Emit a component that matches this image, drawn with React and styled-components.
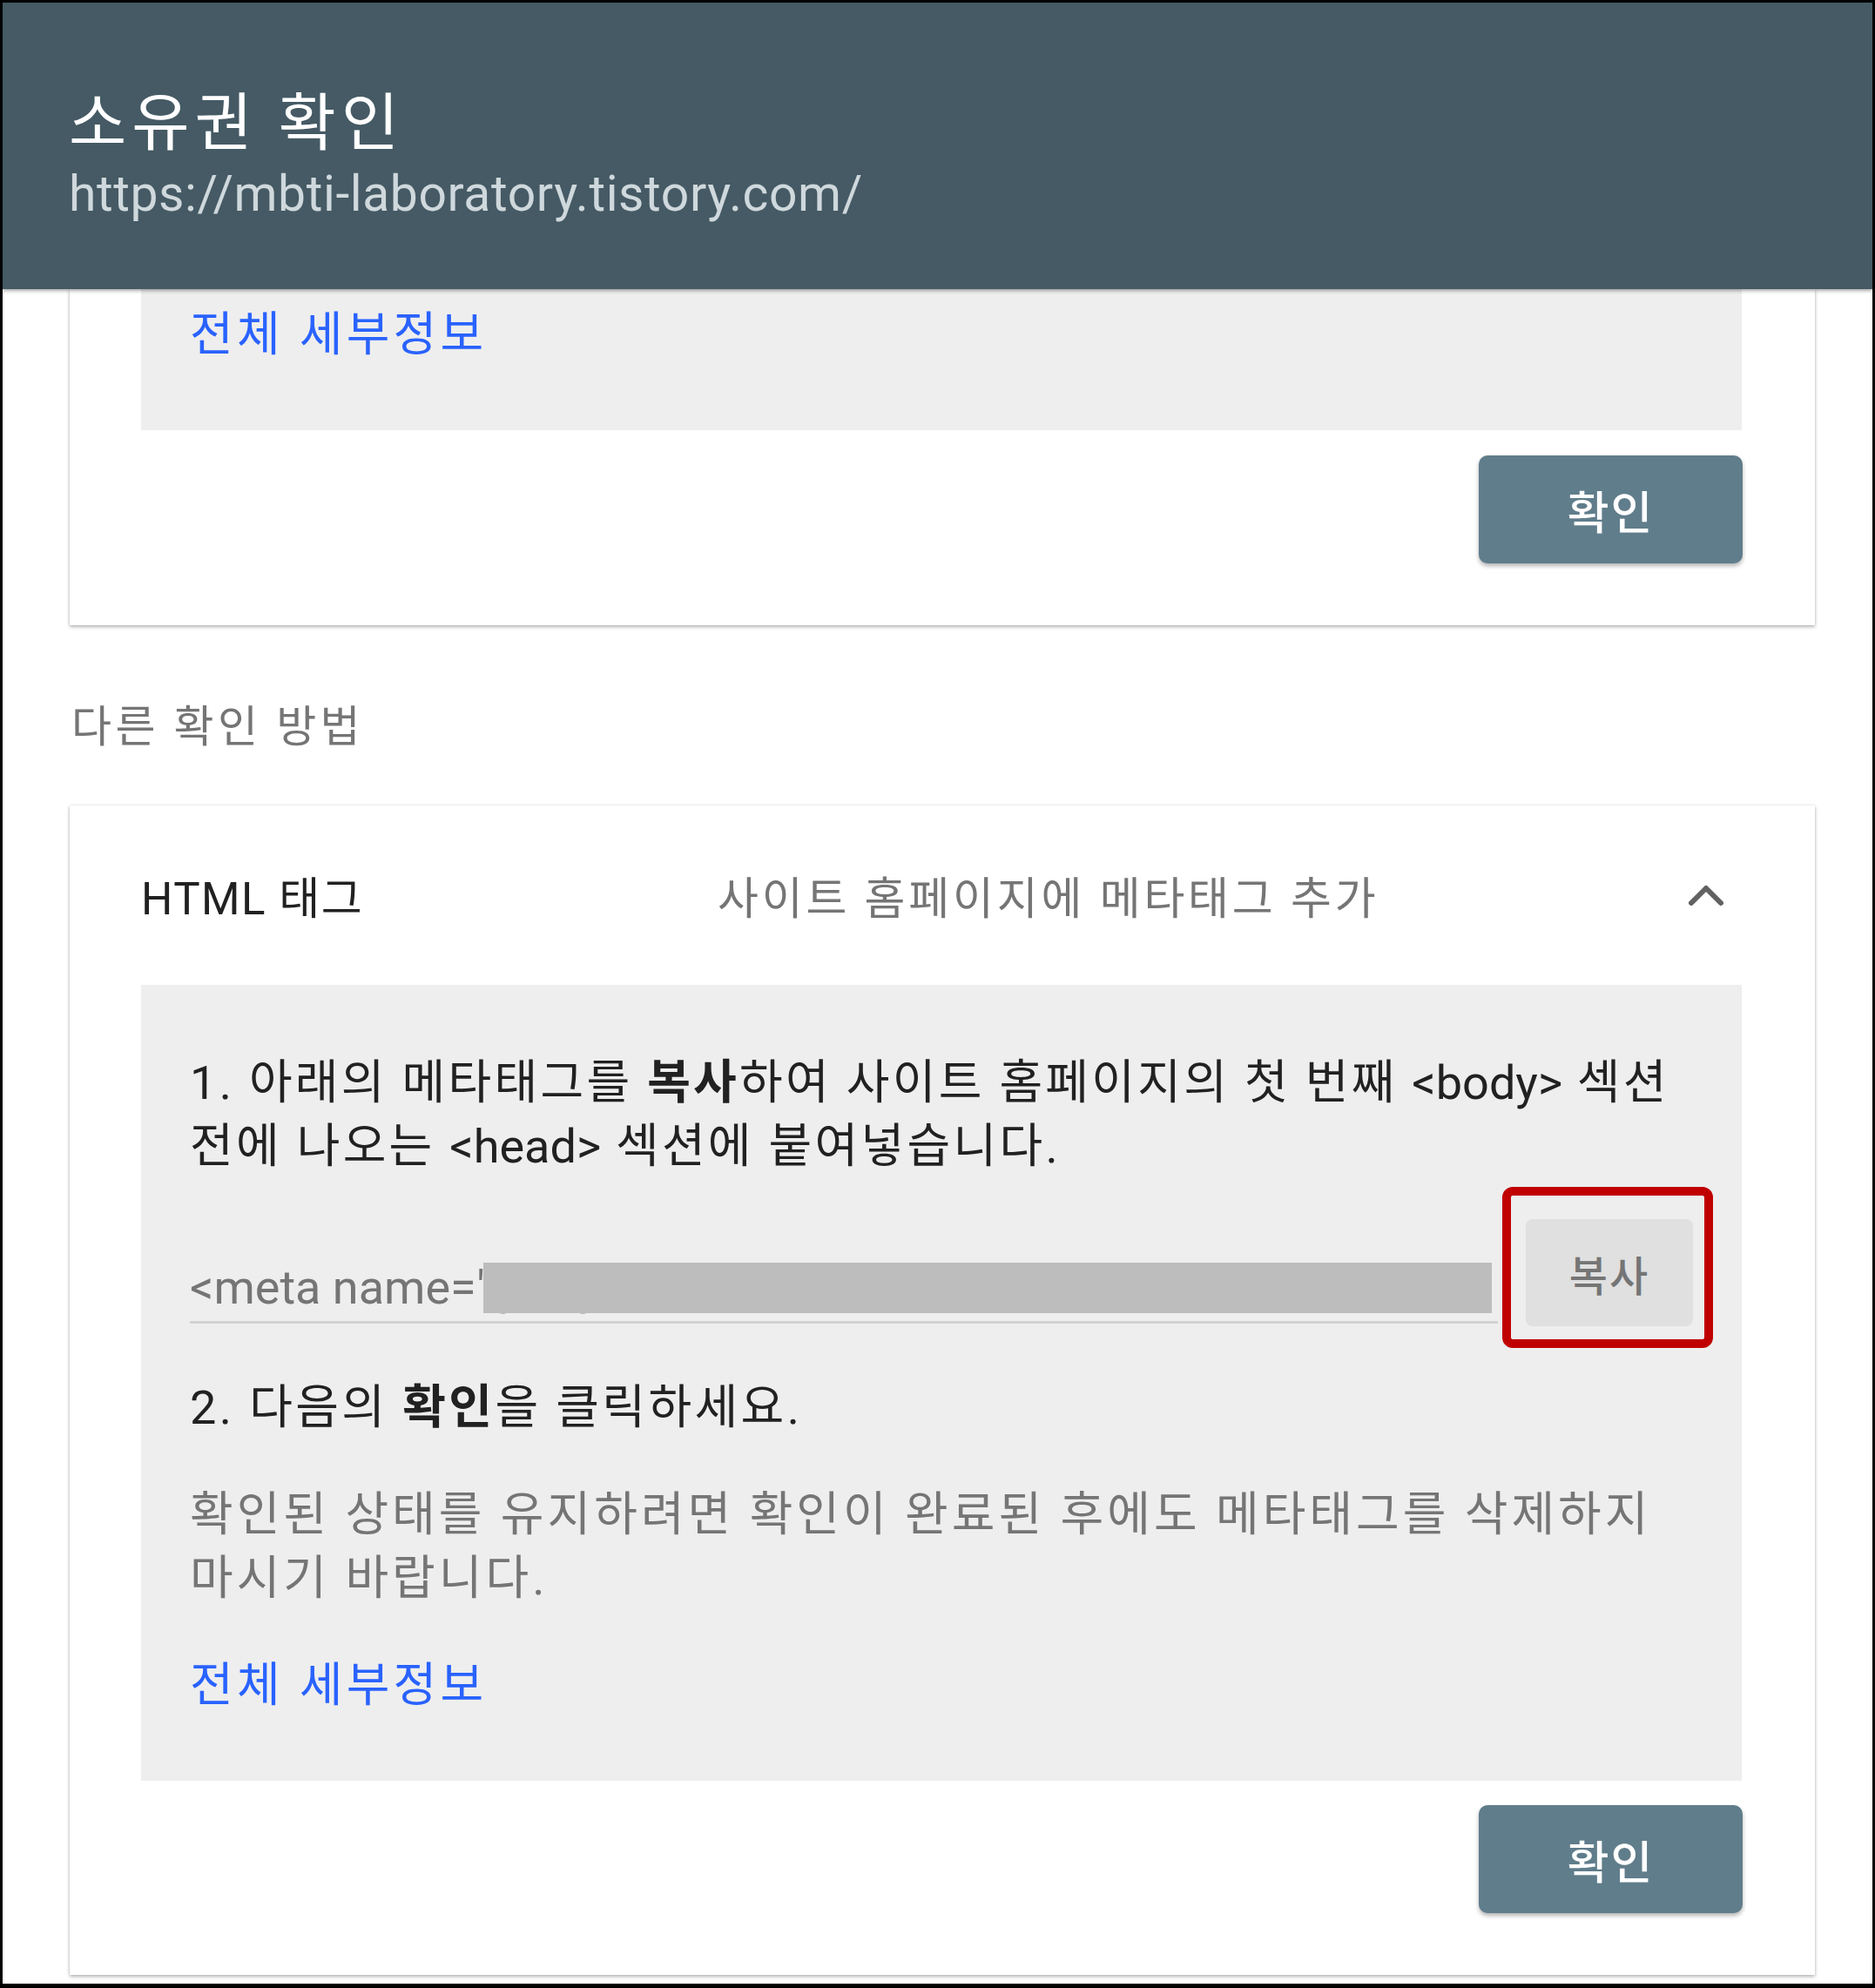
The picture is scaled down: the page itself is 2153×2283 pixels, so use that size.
import React from "react";
import styled, { createGlobalStyle } from "styled-components";

const GlobalStyle = createGlobalStyle`
  html, body { margin: 0; padding: 0; background: #fff; }
  body { font-family: Roboto, "Noto Sans CJK KR", sans-serif; }
  * { box-sizing: border-box; }
`;

const Frame = styled.div`
  width: 2153px;
  height: 2283px;
  border: 3px solid #000;
  border-bottom-width: 5px;
  background: #fff;
  overflow: hidden;
  display: flex;
  flex-direction: column;
`;

const Header = styled.header`
  flex: none;
  height: 329px;
  background: #455a64;
  padding: 96px 76px 0;
  box-shadow: 0 2px 4px rgba(0, 0, 0, 0.35);
  position: relative;
  z-index: 2;
`;

const Title = styled.h1`
  margin: 0;
  font-size: 72px;
  line-height: 86px;
  font-weight: 400;
  letter-spacing: 6px;
  color: #fff;
`;

const SiteUrl = styled.div`
  margin-top: 3px;
  font-size: 57px;
  line-height: 70px;
  color: #cfd8dc;
  letter-spacing: 0.6px;
`;

const Content = styled.main`
  flex: 1;
  padding: 0 66px 0 77px;
  display: flex;
  flex-direction: column;
`;

const Card = styled.section`
  background: #fff;
  box-shadow: 0 2px 4px rgba(0, 0, 0, 0.28), 0 0 3px rgba(0, 0, 0, 0.1);
`;

const SectionLabel = styled.div`
  margin: 82px 0 55px 2px;
  font-size: 50px;
  line-height: 70px;
  letter-spacing: 4.4px;
  color: #757575;
`;

const CardHead = styled.div`
  height: 206px;
  display: grid;
  grid-template-columns: 662px 1fr auto;
  align-items: center;
  padding: 0 105px 0 82px;
`;

const MethodName = styled.div`
  font-size: 51px;
  letter-spacing: 1.5px;
  color: #212121;
`;

const MethodDesc = styled.div`
  font-size: 51px;
  letter-spacing: 3.8px;
  color: #757575;
`;

const GrayBox = styled.div`
  margin: 0 84px 0 82px;
  background: #eeeeee;
  padding: ${(p) => p.$top}px 56px 73px;
`;

const Para = styled.p`
  margin: ${(p) => p.$mt || 0}px 0 0;
  font-size: 54px;
  line-height: 73px;
  letter-spacing: ${(p) => p.$ls || 3}px;
  color: ${(p) => (p.$muted ? "#757575" : "#212121")};

  b {
    font-weight: 700;
  }
`;

const Tag = styled.span`
  letter-spacing: 0;
`;

const DetailLink = styled.a`
  display: block;
  margin-top: ${(p) => p.$mt || 0}px;
  font-size: 54px;
  line-height: 73px;
  letter-spacing: 4.3px;
  color: #2962ff;
  text-decoration: none;
`;

const InputRow = styled.div`
  margin-top: 47px;
  display: flex;
  align-items: flex-end;
  gap: 32px;
`;

const Field = styled.div`
  flex: 1;
  min-width: 0;
  position: relative;
  margin-bottom: 3px;
  padding-bottom: 6px;
  border-bottom: 3px solid #d2d2d2;
  font-size: 54px;
  line-height: 64px;
  color: #757575;
  white-space: nowrap;
  overflow: hidden;
`;

const Redaction = styled.span`
  position: absolute;
  left: 337px;
  top: 3px;
  width: 1158px;
  height: 58px;
  background: #bdbdbd;
`;

const CopyWrap = styled.div`
  position: relative;
  flex: none;
`;

const Highlight = styled.div`
  position: absolute;
  top: -37px;
  left: -27px;
  right: -23px;
  bottom: -25px;
  border: 10px solid #c00000;
  border-radius: 12px;
  pointer-events: none;
`;

const CopyButton = styled.button`
  display: block;
  width: 192px;
  height: 123px;
  border: none;
  border-radius: 8px;
  background: #e0e0e0;
  color: #757575;
  font-family: inherit;
  font-size: 48px;
  font-weight: 500;
  letter-spacing: 2px;
  padding: 0;
`;

const Actions = styled.div`
  display: flex;
  justify-content: flex-end;
  padding: ${(p) => p.$top}px 83px ${(p) => p.$bottom}px 0;
`;

const ConfirmButton = styled.button`
  width: 303px;
  height: 124px;
  border: none;
  border-radius: 10px;
  background: #607d8b;
  color: #fff;
  font-family: inherit;
  font-size: 52px;
  font-weight: 500;
  letter-spacing: 2px;
  box-shadow: 0 3px 5px rgba(0, 0, 0, 0.3);
  padding: 0;
`;

const Chevron = () => (
  <svg width="40" height="26" viewBox="0 0 40 26" fill="none">
    <polyline
      points="3,22 20,5 37,22"
      stroke="#616161"
      strokeWidth="6"
      strokeLinecap="round"
      strokeLinejoin="round"
    />
  </svg>
);

export default function App() {
  return (
    <>
      <GlobalStyle />
      <Frame>
        <Header>
          <Title>소유권 확인</Title>
          <SiteUrl>https://mbti-laboratory.tistory.com/</SiteUrl>
        </Header>
        <Content>
          <Card>
            <GrayBox $top={16}>
              <DetailLink href="#">전체 세부정보</DetailLink>
            </GrayBox>
            <Actions $top={29} $bottom={71}>
              <ConfirmButton>확인</ConfirmButton>
            </Actions>
          </Card>

          <SectionLabel>다른 확인 방법</SectionLabel>

          <Card>
            <CardHead>
              <MethodName>HTML 태그</MethodName>
              <MethodDesc>사이트 홈페이지에 메타태그 추가</MethodDesc>
              <Chevron />
            </CardHead>
            <GrayBox $top={76}>
              <Para $ls={3.3}>
                1. 아래의 메타태그를 <b>복사</b>하여 사이트 홈페이지의 첫 번째{" "}
                <Tag>&lt;body&gt;</Tag> 섹션 전에 나오는 <Tag>&lt;head&gt;</Tag>{" "}
                섹션에 붙여넣습니다.
              </Para>
              <InputRow>
                <Field>
                  &lt;meta name="google-site-verification" content="" /&gt;
                  <Redaction />
                </Field>
                <CopyWrap>
                  <CopyButton>복사</CopyButton>
                  <Highlight />
                </CopyWrap>
              </InputRow>
              <Para $mt={57} $ls={3.4}>
                2. 다음의 <b>확인</b>을 클릭하세요.
              </Para>
              <Para $mt={50} $ls={4} $muted>
                확인된 상태를 유지하려면 확인이 완료된 후에도 메타태그를 삭제하지
                마시기 바랍니다.
              </Para>
              <DetailLink href="#" $mt={50}>
                전체 세부정보
              </DetailLink>
            </GrayBox>
            <Actions $top={28} $bottom={71}>
              <ConfirmButton>확인</ConfirmButton>
            </Actions>
          </Card>
        </Content>
      </Frame>
    </>
  );
}
